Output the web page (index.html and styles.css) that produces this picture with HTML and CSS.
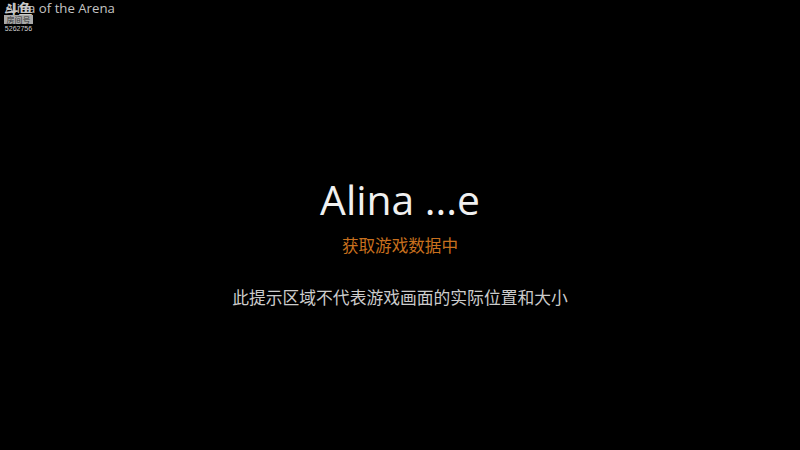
FILE: index.html
```html
<!DOCTYPE html>
<html lang="en">
<head>
    <meta charset="UTF-8">
    <title>Alina of the Arena</title>
    <link rel="stylesheet" href="styles.css">
</head>
<body>

<div class="topbar">
    <span class="gameTitle">Alina of the Arena</span>
    <div class="roomTag">
        <span class="roomLogo">斗鱼</span>
        <span class="roomLabel">房间号</span>
        <span class="roomNum">5262756</span>
    </div>
</div>

<div class="loading">
    <h1 class="loadingName">Alina ...e</h1>
    <p class="loadingState">获取游戏数据中</p>
    <p class="loadingHint">此提示区域不代表游戏画面的实际位置和大小</p>
</div>

</body>
</html>
```

FILE: styles.css
```css
*{margin: 0; padding: 0; box-sizing: border-box;}

body{
    width: 800px;
    height: 450px;
    overflow: hidden;
    background: #000;
    color: #f2f2f2;
    font-family: "Open Sans", "Noto Sans CJK SC", sans-serif;
    position: relative;
    display: flex;
    justify-content: center;
}
.topbar{
    position: absolute;
    left: 0;
    top: 0;
}
.gameTitle{
    display: block;
    font-size: 13.2px;
    line-height: 17px;
    padding-left: 5px;
    color: #c4c4c4;
    white-space: nowrap;
}
.roomTag{
    position: absolute;
    left: 3px;
    top: 1px;
    width: 31px;
    display: flex;
    flex-direction: column;
    align-items: center;
}
.roomLogo{
    font-family: "Noto Sans CJK SC", sans-serif;
    font-size: 14px;
    line-height: 14px;
    font-weight: 700;
    color: #c8c8c8;
}
.roomLabel{
    width: 29px;
    height: 9px;
    background: #a8a8a8;
    color: #333;
    font-family: "Noto Sans CJK SC", sans-serif;
    font-size: 8px;
    line-height: 9px;
    text-align: center;
}
.roomNum{
    font-family: "Liberation Sans", sans-serif;
    font-size: 7px;
    line-height: 10px;
    color: #d0d0d0;
}
.loading{
    display: flex;
    flex-direction: column;
    align-items: center;
    padding-top: 172px;
}
.loadingName{
    font-size: 40.8px;
    font-weight: 400;
    line-height: 54px;
    color: #f0f0f0;
}
.loadingState{
    font-family: "Noto Sans CJK SC", sans-serif;
    font-size: 16.6px;
    line-height: 24px;
    margin-top: 7px;
    color: #c8701e;
}
.loadingHint{
    font-family: "Noto Sans CJK SC", sans-serif;
    font-size: 16.8px;
    line-height: 24px;
    margin-top: 28px;
    color: #cccccc;
}
```
